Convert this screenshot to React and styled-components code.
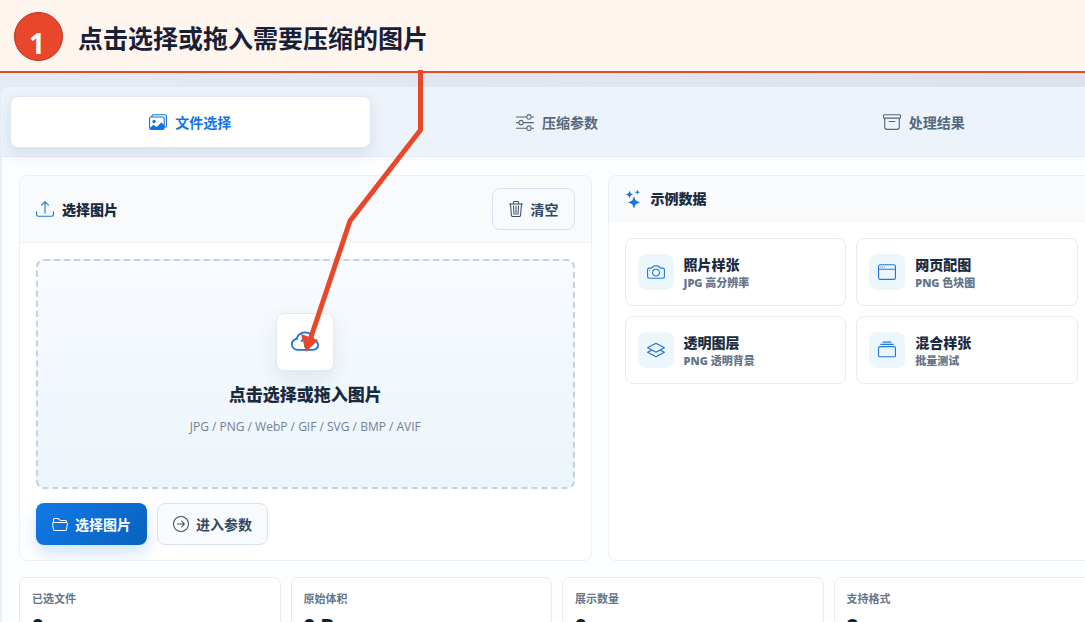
import React, { useState } from 'react';
import styled, { createGlobalStyle, css } from 'styled-components';
import {
  BsArchive,
  BsArrowRightCircle,
  BsCamera,
  BsCloudArrowUp,
  BsCollection,
  BsFolder2Open,
  BsImages,
  BsLayers,
  BsSliders,
  BsStars,
  BsTrash3,
  BsUpload,
  BsWindow,
} from 'react-icons/bs';

export default function App() {
  const [active, setActive] = useState('files');

  return (
    <Page>
      <GlobalStyle />
      <StepBar>
        <StepNumber>1</StepNumber>
        <StepTitle>点击选择或拖入需要压缩的图片</StepTitle>
      </StepBar>
      <Shell>
        <Tabs>
          {tabs.map(({ id, text, Icon }) => (
            <Tab
              key={id}
              type="button"
              $active={id === active}
              onClick={() => setActive(id)}
            >
              <Icon size={18} />
              {text}
            </Tab>
          ))}
        </Tabs>
        <Content>
          <Panels>
            <Panel>
              <PanelHead>
                <PanelTitle>
                  <BsUpload size={18} />
                  选择图片
                </PanelTitle>
                <Button type="button">
                  <BsTrash3 size={16} />
                  清空
                </Button>
              </PanelHead>
              <PanelBody>
                <DropZone type="button">
                  <DropIcon>
                    <BsCloudArrowUp size={28} />
                  </DropIcon>
                  <DropTitle>点击选择或拖入图片</DropTitle>
                  <DropHint>JPG / PNG / WebP / GIF / SVG / BMP / AVIF</DropHint>
                </DropZone>
                <Actions>
                  <Button type="button" $primary>
                    <BsFolder2Open size={16} />
                    选择图片
                  </Button>
                  <Button type="button">
                    <BsArrowRightCircle size={16} />
                    进入参数
                  </Button>
                </Actions>
              </PanelBody>
            </Panel>
            <Panel>
              <PanelHead>
                <PanelTitle>
                  <BsStars size={18} />
                  示例数据
                </PanelTitle>
              </PanelHead>
              <Samples>
                {samples.map(({ title, note, Icon }) => (
                  <Sample key={title} type="button">
                    <SampleIcon>
                      <Icon size={18} />
                    </SampleIcon>
                    <SampleText>
                      <SampleTitle>{title}</SampleTitle>
                      <SampleNote>{note}</SampleNote>
                    </SampleText>
                  </Sample>
                ))}
              </Samples>
            </Panel>
          </Panels>
          <Stats>
            {stats.map((stat) => (
              <Stat key={stat.label}>
                <StatLabel>{stat.label}</StatLabel>
                <StatValue>{stat.value}</StatValue>
              </Stat>
            ))}
          </Stats>
        </Content>
      </Shell>
      <Pointer width="440" height="360" viewBox="0 0 440 360" aria-hidden="true">
        <polyline
          points="420.5,70 420.5,130 350,221 309,343"
          fill="none"
          stroke="#e8472b"
          strokeWidth="5"
        />
        <polygon points="301,334 318,340 306,352" fill="#e8472b" />
      </Pointer>
    </Page>
  );
}

const GlobalStyle = createGlobalStyle`
  * {
    box-sizing: border-box;
  }

  body {
    margin: 0;
    font-family: 'Open Sans', 'Noto Sans CJK SC', sans-serif;
    color: #1b2b3f;
  }

  button {
    font: inherit;
    color: inherit;
    cursor: pointer;
  }

  svg {
    flex: none;
  }
`;

const Page = styled.div`
  position: relative;
  display: flex;
  flex-direction: column;
  height: 100vh;
  overflow: hidden;
  background: linear-gradient(90deg, #e5ebf2, #dde1eb);
`;

const StepBar = styled.header`
  display: flex;
  align-items: center;
  gap: 15px;
  flex: none;
  height: 73px;
  padding: 2px 14px 0;
  background: #fff5ef;
  border-bottom: 2px solid #e8472b;
`;

const StepNumber = styled.span`
  width: 49px;
  height: 49px;
  padding: 10px 3px 0 0;
  border: 1px solid #b9301b;
  border-radius: 50%;
  background: #e8472b;
  color: white;
  font-size: 28px;
  font-weight: 700;
  line-height: 40px;
  text-align: center;
`;

const StepTitle = styled.h1`
  margin: 0;
  padding-top: 2px;
  color: #172036;
  font-size: 25px;
  font-weight: 700;
  line-height: 32px;
`;

/* the workspace runs past the right edge of the window */
const Shell = styled.main`
  flex: none;
  margin: 14px -28px 0 1px;
  border: 1px solid #f0f4f9;
  border-radius: 8px 8px 0 0;
  background: #fcfdff;
  overflow: hidden;
`;

const Tabs = styled.nav`
  display: grid;
  grid-template-columns: repeat(3, 1fr);
  gap: 6px;
  padding: 8px;
  background: #ecf3fa;
  border-bottom: 1px solid #e1e8f0;
`;

const Tab = styled.button`
  display: flex;
  align-items: center;
  justify-content: center;
  gap: 8px;
  height: 52px;
  padding: 0 8px 1px;
  border: 1px solid transparent;
  border-radius: 8px;
  background: transparent;
  font-size: 14px;
  font-weight: 700;

  && {
    color: #56677c;
  }

  ${(props) =>
    props.$active &&
    css`
      border-color: #dfe8f1;
      background: white;
      box-shadow: 0 6px 16px rgba(40, 80, 120, 0.12);

      && {
        color: #1275df;
      }
    `}
`;

const Content = styled.div`
  padding: 18px 17px;
`;

const Panels = styled.div`
  display: grid;
  grid-template-columns: 572fr 487fr;
  gap: 16px;
`;

const Panel = styled.section`
  border: 1px solid #ebf0f5;
  border-radius: 8px;
  background: white;
  overflow: hidden;
`;

const PanelHead = styled.div`
  display: flex;
  align-items: center;
  justify-content: space-between;
  padding: 12px 16px;
  background: #f8fafc;
  border-bottom: 1px solid #f0f3f7;
`;

const PanelTitle = styled.h2`
  display: flex;
  align-items: center;
  gap: 8px;
  margin: 0;
  font-size: 14px;
  font-weight: 800;
  line-height: 21px;

  svg {
    color: #1677e0;
  }
`;

const PanelBody = styled.div`
  display: flex;
  flex-direction: column;
  gap: 14px;
  padding: 16px 16px 15px;
`;

const Button = styled.button`
  display: inline-flex;
  align-items: center;
  justify-content: center;
  gap: 7px;
  height: 42px;
  padding: 0 15px;
  border: 1px solid #d8e2ec;
  border-radius: 8px;
  background: #f8fbfe;
  font-size: 14px;
  font-weight: 700;

  && {
    color: ${(props) => (props.$primary ? 'white' : '#34485f')};
  }

  ${(props) =>
    props.$primary &&
    css`
      border-color: transparent;
      background: linear-gradient(135deg, #1079e8, #0a62bd) border-box;
      box-shadow: 0 8px 18px rgba(16, 121, 232, 0.2);
    `}
`;

const DropZone = styled.button`
  display: flex;
  flex-direction: column;
  align-items: center;
  justify-content: center;
  height: 230px;
  padding-top: 4px;
  border: 2px dashed #c2d2de;
  border-radius: 8px;
  background: linear-gradient(180deg, #f8fbff, #ecf5fb);
`;

const DropIcon = styled.span`
  display: grid;
  place-items: center;
  width: 58px;
  height: 58px;
  margin-bottom: 12px;
  border: 1px solid #e2ebf4;
  border-radius: 8px;
  background: white;
  color: #1677d8;
  box-shadow: 0 8px 20px rgba(40, 80, 120, 0.1);
`;

const DropTitle = styled.strong`
  margin-bottom: 8px;
  font-size: 17px;
  font-weight: 800;
  line-height: 24px;
`;

const DropHint = styled.span`
  color: #728096;
  font-size: 12px;
  line-height: 24px;
`;

const Actions = styled.div`
  display: flex;
  gap: 10px;
`;

const Samples = styled.div`
  display: grid;
  grid-template-columns: repeat(2, 1fr);
  gap: 10px;
  padding: 16px;
`;

const Sample = styled.button`
  display: flex;
  align-items: center;
  gap: 10px;
  height: 68px;
  padding: 0 12px;
  border: 1px solid #e6ebf0;
  border-radius: 8px;
  background: white;
  text-align: left;
`;

const SampleIcon = styled.span`
  display: grid;
  place-items: center;
  width: 36px;
  height: 36px;
  border-radius: 8px;
  background: #ecf6fd;
  color: #2478d4;
`;

const SampleText = styled.span`
  display: flex;
  flex-direction: column;
  padding-top: 4px;
`;

const SampleTitle = styled.strong`
  font-size: 14px;
  font-weight: 800;
  line-height: 18px;
`;

const SampleNote = styled.span`
  color: #66758a;
  font-size: 11px;
  font-weight: 800;
  line-height: 18px;
`;

const Stats = styled.div`
  display: grid;
  grid-template-columns: repeat(4, 1fr);
  gap: 10px;
  margin-top: 16px;
`;

const Stat = styled.div`
  display: flex;
  flex-direction: column;
  padding: 12px;
  border: 1px solid #e6ebf0;
  border-radius: 8px;
  background: white;
`;

const StatLabel = styled.span`
  color: #66758a;
  font-size: 11px;
  font-weight: 700;
  line-height: 18px;
`;

const StatValue = styled.strong`
  margin-top: 4px;
  color: #141f2e;
  font-size: 20px;
  font-weight: 800;
  line-height: 28px;
`;

const Pointer = styled.svg`
  position: absolute;
  top: 0;
  left: 0;
  pointer-events: none;
`;

const tabs = [
  { id: 'files', text: '文件选择', Icon: BsImages },
  { id: 'options', text: '压缩参数', Icon: BsSliders },
  { id: 'results', text: '处理结果', Icon: BsArchive },
];

const samples = [
  { title: '照片样张', note: 'JPG 高分辨率', Icon: BsCamera },
  { title: '网页配图', note: 'PNG 色块图', Icon: BsWindow },
  { title: '透明图层', note: 'PNG 透明背景', Icon: BsLayers },
  { title: '混合样张', note: '批量测试', Icon: BsCollection },
];

const stats = [
  { label: '已选文件', value: '0' },
  { label: '原始体积', value: '0 B' },
  { label: '展示数量', value: '0' },
  { label: '支持格式', value: '8' },
];
